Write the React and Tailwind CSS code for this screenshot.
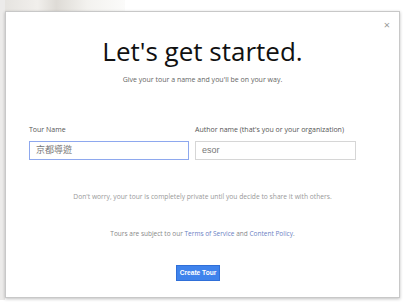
import React from 'react'

// ── Create-tour dialog ───────────────────────────────────────────────────────

const sans = "font-['Open_Sans',sans-serif]"

function Field({ label, value, focused, className = '' }) {
  return (
    <div className={`flex flex-col ${className}`}>
      <label className="text-[7px] leading-[10px] text-[#555] mb-[6px]">{label}</label>
      <div
        className={`h-[19px] flex items-center px-[6px] border bg-white ${
          focused ? 'border-[#8ea8ee]' : 'border-[#d6d6d6]'
        }`}
      >
        <span className="text-[9px] text-[#777] font-['Liberation_Sans','Noto_Sans_CJK_TC',sans-serif]">{value}</span>
      </div>
    </div>
  )
}

export default function App() {
  return (
    <div className={`relative w-[407px] h-[305px] bg-white overflow-hidden ${sans}`}>
      {/* Faded page behind the dialog */}
      <div className="absolute left-0 top-0 w-[125px] h-[12px] bg-[linear-gradient(90deg,#e4e2de,#f1efec_30%,#dedbd6_45%,#f3f2ef_70%,#fbfbfa)]" />
      <div className="absolute left-0 top-0 w-[5px] h-[300px] bg-[#ecebea]" />

      <div className="relative pl-[5px] pt-[11px]">
        <div className="relative w-[395px] h-[287px] bg-white border border-[#c8c8c8] shadow-[0_1px_3px_rgba(0,0,0,0.25)] flex flex-col items-center">
          <button className="absolute right-[9px] top-[7px] text-[11px] leading-none text-[#999]">×</button>

          <h1 className="mt-[22px] text-[26px] leading-[34px] text-[#111]">Let's get started.</h1>
          <p className="mt-[7px] text-[7px] leading-[10px] text-[#666]">
            Give your tour a name and you'll be on your way.
          </p>

          <div className="mt-[40px] w-full flex gap-[6px] px-[23px]">
            <Field className="w-[160px]" label="Tour Name" value="京都導遊" focused />
            <Field className="w-[161px]" label="Author name (that's you or your organization)" value="esor" />
          </div>

          <p className="mt-[32px] text-[6.7px] leading-[10px] text-[#999]">
            Don't worry, your tour is completely private until you decide to share it with others.
          </p>
          <p className="mt-[27px] text-[6.5px] leading-[10px] text-[#888]">
            Tours are subject to our <a className="text-[#6b7fc4]">Terms of Service</a> and{' '}
            <a className="text-[#6b7fc4]">Content Policy</a>.
          </p>

          <button className="mt-[26px] mr-[9px] h-[16px] px-[3px] bg-[#3f83ec] border border-[#2f6fd8] text-white text-[6.6px] font-bold font-['Liberation_Sans',sans-serif]">
            Create Tour
          </button>
        </div>
      </div>
    </div>
  )
}
